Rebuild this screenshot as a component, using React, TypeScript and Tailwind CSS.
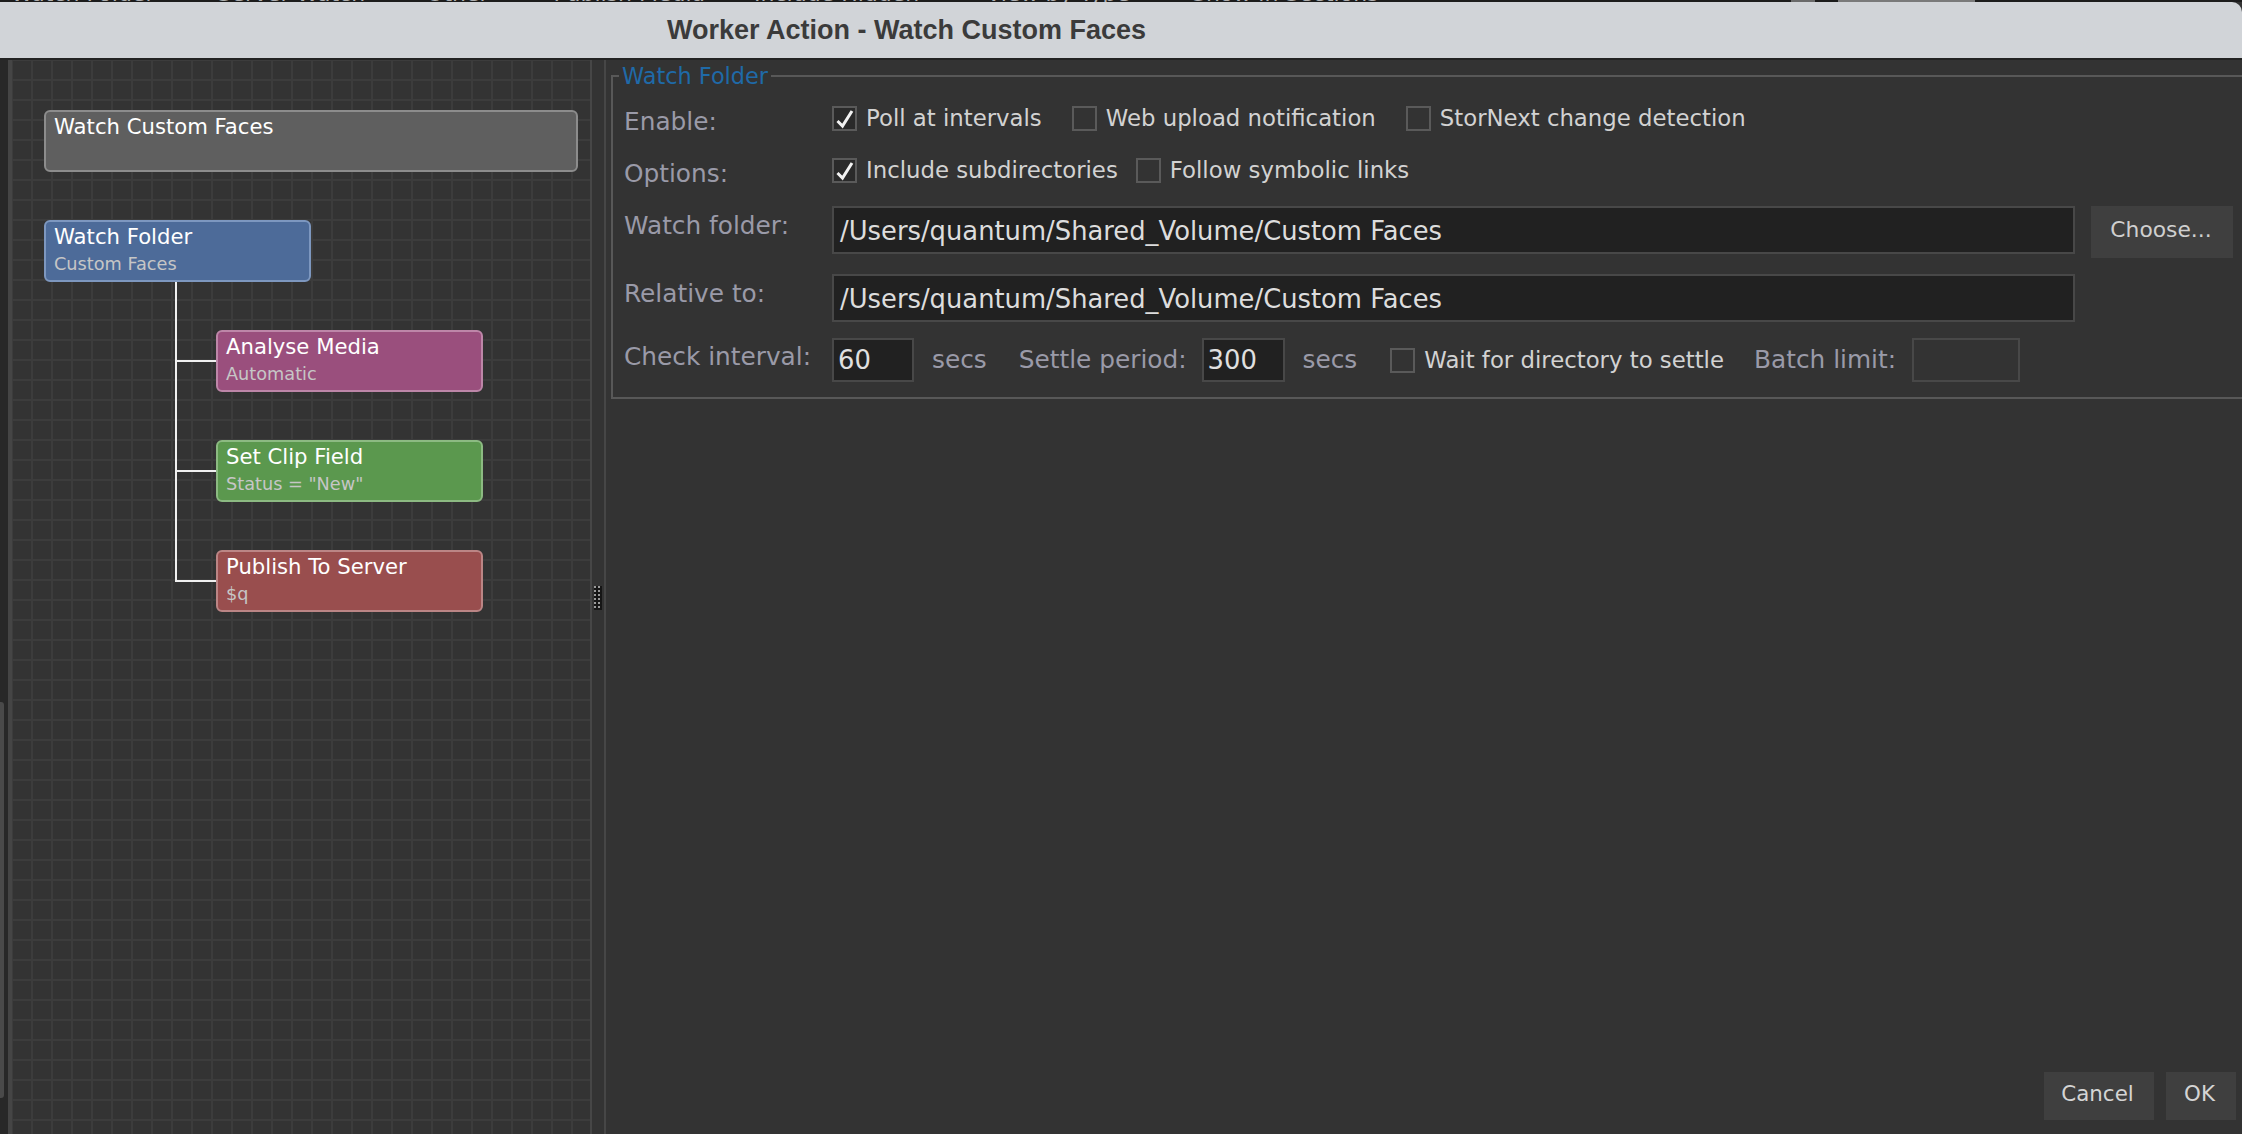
import React from "react";

const ui = "font-['DejaVu_Sans',sans-serif]";

function Check({ checked, label }: { checked?: boolean; label: string }) {
  return (
    <div className="flex items-center gap-[9px]">
      <div className={`relative w-[25px] h-[25px] border-2 border-[#5a5a5a] ${checked ? "bg-[#2a2a2a]" : "bg-[#333333]"}`}>
        {checked && (
          <svg viewBox="0 0 25 25" className="absolute left-[-2px] top-[-2px] w-[25px] h-[25px]">
            <path d="M5.5 15 L10.5 20 L20 5" fill="none" stroke="#f2f2f2" strokeWidth="3" />
          </svg>
        )}
      </div>
      <span className="text-[#d2d2d2] text-[22.8px] leading-[26px] whitespace-nowrap">{label}</span>
    </div>
  );
}

function Node({ title, sub, cls }: { title: string; sub?: string; cls: string }) {
  return (
    <div className={`absolute rounded-[6px] border-2 pl-[8px] pt-[1px] ${cls}`}>
      <div className="text-white text-[21.2px] leading-[27px] whitespace-nowrap">{title}</div>
      {sub && <div className="mt-[2px] text-[#c6c6c6] text-[17.7px] leading-[25px] whitespace-nowrap">{sub}</div>}
    </div>
  );
}

const label = "text-[#9a9aa8] text-[24.8px] whitespace-nowrap";
const muted = "text-[#9a9aa8] text-[24.8px] whitespace-nowrap";

function TopStrip() {
  const items: [string, string][] = [
    ["Watch Folder", "ml-[11px]"],
    ["Server Watch", "ml-[63px]"],
    ["Other", "ml-[61px]"],
    ["Publish Media", "ml-[65px]"],
    ["Include Hidden", "ml-[49px]"],
    ["View by Type", "ml-[67px]"],
    ["Show in Sections", "ml-[62px]"],
  ];
  return (
    <div className="h-[2px] bg-[#1c1c1c] shrink-0 overflow-hidden flex items-end text-[#b0b0b0] text-[22px] leading-[16px]">
      {items.map(([t, c]) => (
        <span key={t} className={`whitespace-nowrap ${c}`}>{t}</span>
      ))}
      <div className="ml-auto w-[24px] h-[2px] bg-[#6a6a6a]" />
      <div className="ml-[23px] w-[137px] h-[2px] mr-[267px] bg-[#7a7a7a]" />
    </div>
  );
}

function Grip() {
  const rows = [0, 4, 8, 12, 16, 20];
  return (
    <svg width="8" height="24" viewBox="0 0 8 24">
      <rect width="8" height="24" fill="#161616" />
      {rows.map((y) => (
        <g key={y}>
          <rect x="0" y={y} width="2" height="2" fill="#9a9a9a" />
          <rect x="4" y={y} width="2" height="2" fill="#9a9a9a" />
        </g>
      ))}
    </svg>
  );
}

export default function App() {
  return (
    <div className={`w-[2242px] h-[1134px] bg-[#333333] flex flex-col overflow-hidden ${ui}`}>
      <TopStrip />
      <div className="h-[56px] shrink-0 bg-[#d1d4d8] rounded-tr-[10px] flex items-center pl-[667px] font-['Liberation_Sans',sans-serif] font-bold text-[27px] text-[#3b3b3b]">
        Worker Action - Watch Custom Faces
      </div>
      <div className="h-[2px] bg-[#222222] shrink-0" />
      <div className="flex flex-1 min-h-0">
        <div className="w-[8px] shrink-0 bg-[#282828] relative">
          <div className="absolute left-0 top-[642px] w-[4px] h-[396px] bg-[#4a4a4a] rounded-r-[3px]" />
        </div>
        <div className="w-[4px] shrink-0 bg-[#454545]" />
        <div className="relative w-[580px] shrink-0 border-r-2 border-[#464646] bg-[linear-gradient(#3c3c3c_2px,transparent_2px),linear-gradient(90deg,#3c3c3c_2px,transparent_2px)] bg-[size:20px_20px] bg-position-[-1px_-1px]">
          <Node title="Watch Custom Faces" cls="left-[32px] top-[50px] w-[534px] h-[62px] bg-[#5f5f5f] border-[#8c8c8c]" />
          <Node title="Watch Folder" sub="Custom Faces" cls="left-[32px] top-[160px] w-[267px] h-[62px] bg-[#4d6b99] border-[#7d97bf]" />
          <div className="absolute left-[163px] top-[222px] w-[2px] h-[300px] bg-[#f0f0f0]" />
          <div className="absolute left-[163px] top-[300px] w-[41px] h-[2px] bg-[#f0f0f0]" />
          <div className="absolute left-[163px] top-[410px] w-[41px] h-[2px] bg-[#f0f0f0]" />
          <div className="absolute left-[163px] top-[520px] w-[41px] h-[2px] bg-[#f0f0f0]" />
          <Node title="Analyse Media" sub="Automatic" cls="left-[204px] top-[270px] w-[267px] h-[62px] bg-[#9a4f7d] border-[#bd86a8]" />
          <Node title="Set Clip Field" sub={'Status = "New"'} cls="left-[204px] top-[380px] w-[267px] h-[62px] bg-[#5b984e] border-[#8cba82]" />
          <Node title="Publish To Server" sub="$q" cls="left-[204px] top-[490px] w-[267px] h-[62px] bg-[#994e4e] border-[#bb8585]" />
        </div>
        <div className="w-[14px] shrink-0 border-r-2 border-[#464646] flex flex-col items-center pt-[526px]">
          <Grip />
        </div>
        <div className="flex-1 min-w-0 flex flex-col pl-[5px]">
          <fieldset className="border-2 border-r-0 border-[#585858] h-[335px] mt-[4px] pl-[11px]">
            <legend className="-ml-[5px] px-[3px] text-[#1f6aa8] text-[22.4px] leading-[24px]">Watch Folder</legend>
            <div className="flex flex-col">
              <div className="flex items-center h-[26px] mt-[17px]">
                <span className={`${label} w-[208px] pt-[7px]`}>Enable:</span>
                <div className="flex gap-[30px]">
                  <Check checked label="Poll at intervals" />
                  <Check label="Web upload notification" />
                  <Check label="StorNext change detection" />
                </div>
              </div>
              <div className="flex items-center h-[26px] mt-[26px]">
                <span className={`${label} w-[208px] pt-[7px]`}>Options:</span>
                <div className="flex gap-[18px]">
                  <Check checked label="Include subdirectories" />
                  <Check label="Follow symbolic links" />
                </div>
              </div>
              <div className="flex items-start mt-[23px]">
                <span className={`${label} w-[208px] mt-[1px]`}>Watch folder:</span>
                <div className="w-[1243px] h-[48px] bg-[#212121] border-2 border-[#484848] pl-[6px] pt-[2px] flex items-center text-[#dddddd] text-[25.8px]">
                  /Users/quantum/Shared_Volume/Custom Faces
                </div>
                <div className="ml-[16px] w-[142px] h-[52px] pb-[4px] pr-[2px] bg-[#3f3f3f] flex items-center justify-center text-[#cfcfcf] text-[21.8px]">
                  Choose...
                </div>
              </div>
              <div className="flex items-start mt-[16px]">
                <span className={`${label} w-[208px] mt-[1px]`}>Relative to:</span>
                <div className="w-[1243px] h-[48px] bg-[#212121] border-2 border-[#484848] pl-[6px] pt-[2px] flex items-center text-[#dddddd] text-[25.8px]">
                  /Users/quantum/Shared_Volume/Custom Faces
                </div>
              </div>
              <div className="flex items-center h-[44px] mt-[16px]">
                <span className={`${label} w-[208px] mt-[-6px]`}>Check interval:</span>
                <div className="w-[82px] h-[44px] bg-[#212121] border-2 border-[#484848] pl-[4px] pt-[1px] flex items-center text-[#e0e0e0] text-[25.8px]">60</div>
                <span className={`ml-[18px] ${muted}`}>secs</span>
                <span className={`ml-[32px] ${muted}`}>Settle period:</span>
                <div className="ml-[15px] w-[83px] h-[44px] bg-[#212121] border-2 border-[#484848] pl-[4px] pt-[1px] flex items-center text-[#e0e0e0] text-[25.8px]">300</div>
                <span className={`ml-[18px] ${muted}`}>secs</span>
                <div className="ml-[33px]"><Check label="Wait for directory to settle" /></div>
                <span className={`ml-[30px] ${muted}`}>Batch limit:</span>
                <div className="ml-[16px] w-[108px] h-[44px] border-2 border-[#484848]" />
              </div>
            </div>
          </fieldset>
          <div className="mt-auto mb-[14px] flex justify-end gap-[12px] pr-[6px]">
            <div className="w-[110px] h-[48px] pb-[3px] pr-[3px] bg-[#3f3f3f] flex items-center justify-center text-[#d4d4d4] text-[21.4px]">Cancel</div>
            <div className="w-[70px] h-[48px] pb-[3px] pr-[3px] bg-[#3f3f3f] flex items-center justify-center text-[#d4d4d4] text-[21.4px]">OK</div>
          </div>
        </div>
      </div>
    </div>
  );
}
